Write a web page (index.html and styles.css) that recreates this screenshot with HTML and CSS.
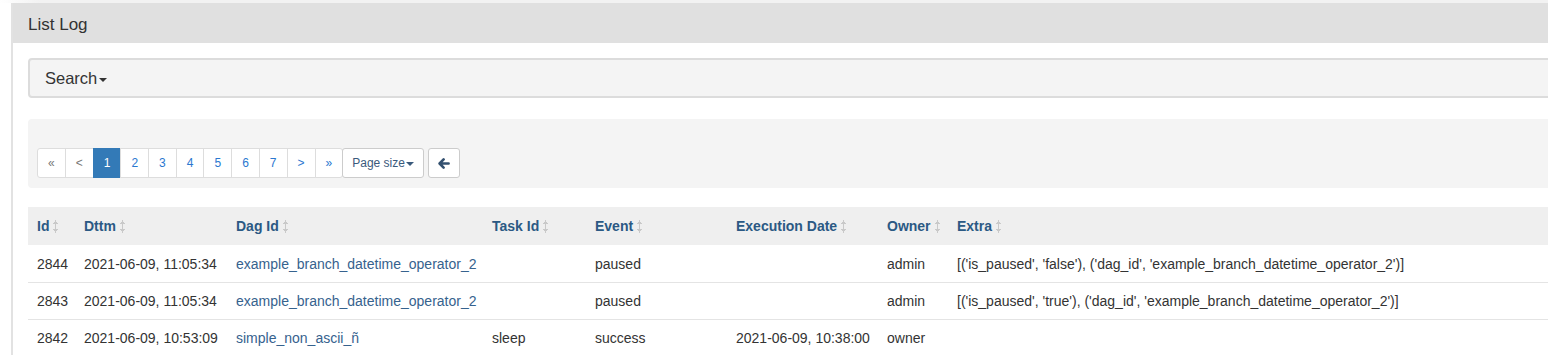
FILE: index.html
```html
<!doctype html>
<html>
  <head>
    <meta charset="utf-8">
    <title>List Log</title>
    <link rel="stylesheet" href="styles.css">
  </head>
  <body>
    <div class="topbar"></div>

    <div class="panel">
      <div class="panel-heading">List Log</div>

      <div class="panel-body">
        <div class="search-bar">
          <span class="search-toggle">Search<span class="caret"></span></span>
        </div>

        <div class="well">
          <ul class="pagination">
            <li class="disabled"><a>&laquo;</a></li>
            <li class="disabled"><a>&lt;</a></li>
            <li class="active"><a>1</a></li>
            <li><a>2</a></li>
            <li><a>3</a></li>
            <li><a>4</a></li>
            <li><a>5</a></li>
            <li><a>6</a></li>
            <li><a>7</a></li>
            <li><a>&gt;</a></li>
            <li><a>&raquo;</a></li>
          </ul>
          <button class="btn">Page size<span class="caret"></span></button>
          <button class="btn btn-icon">
            <svg width="12" height="11" viewBox="0 0 12 11">
              <path d="M5.6 1.4 L1.6 5.5 L5.6 9.6 M2 5.5 H10.6" fill="none" stroke="#33506f" stroke-width="2.6" stroke-linecap="round" stroke-linejoin="round"/>
            </svg>
          </button>
        </div>

        <table class="table">
          <colgroup>
            <col class="w-id">
            <col class="w-dttm">
            <col class="w-dag">
            <col class="w-task">
            <col class="w-event">
            <col class="w-exec">
            <col class="w-owner">
            <col>
          </colgroup>
          <thead>
            <tr>
              <th><a>Id</a><span class="sort"></span></th>
              <th><a>Dttm</a><span class="sort"></span></th>
              <th><a>Dag Id</a><span class="sort"></span></th>
              <th><a>Task Id</a><span class="sort"></span></th>
              <th><a>Event</a><span class="sort"></span></th>
              <th><a>Execution Date</a><span class="sort"></span></th>
              <th><a>Owner</a><span class="sort"></span></th>
              <th><a>Extra</a><span class="sort"></span></th>
            </tr>
          </thead>
          <tbody>
            <tr>
              <td>2844</td>
              <td>2021-06-09, 11:05:34</td>
              <td><a>example_branch_datetime_operator_2</a></td>
              <td></td>
              <td>paused</td>
              <td></td>
              <td>admin</td>
              <td>[('is_paused', 'false'), ('dag_id', 'example_branch_datetime_operator_2')]</td>
            </tr>
            <tr>
              <td>2843</td>
              <td>2021-06-09, 11:05:34</td>
              <td><a>example_branch_datetime_operator_2</a></td>
              <td></td>
              <td>paused</td>
              <td></td>
              <td>admin</td>
              <td>[('is_paused', 'true'), ('dag_id', 'example_branch_datetime_operator_2')]</td>
            </tr>
            <tr>
              <td>2842</td>
              <td>2021-06-09, 10:53:09</td>
              <td><a>simple_non_ascii_ñ</a></td>
              <td>sleep</td>
              <td>success</td>
              <td>2021-06-09, 10:38:00</td>
              <td>owner</td>
              <td></td>
            </tr>
          </tbody>
        </table>
      </div>
    </div>
  </body>
</html>
```

FILE: styles.css
```css
body {
  margin: 0;
  padding: 0 0 0 11px;
  overflow: hidden;
  background: #fff;
  font-family: "Liberation Sans", Arial, sans-serif;
  font-size: 14px;
  color: #333;
}
.topbar {
  height: 3px;
  margin-left: -11px;
  background: linear-gradient(to right, #fff, #f2f2f2 40px);
}
.panel {
  width: 1580px;
  border-left: 2px solid #e2e2e2;
}
.panel-heading {
  height: 38px;
  padding: 2px 15px 0;
  line-height: 40px;
  background: #e0e0e0;
  font-size: 17px;
  color: #333;
}
.panel-body {
  padding: 15px;
}
.search-bar {
  height: 36px;
  line-height: 36px;
  padding: 0 15px;
  background: #f4f4f4;
  border: 2px solid #dcdcdc;
  border-radius: 4px;
}
.search-toggle {
  font-size: 16.5px;
  color: #333;
}
.caret {
  display: inline-block;
  width: 0;
  height: 0;
  margin-left: 2px;
  vertical-align: middle;
  border-top: 4px solid;
  border-left: 4px solid transparent;
  border-right: 4px solid transparent;
}
.well {
  display: flex;
  align-items: center;
  margin-top: 21px;
  padding: 29px 9px 10px;
  background: #f4f4f4;
  border-radius: 4px;
}
.pagination {
  display: flex;
  margin: 0;
  padding: 0;
  list-style: none;
}
.pagination li a {
  display: block;
  padding: 5px 10px;
  margin-left: -1px;
  font-size: 12px;
  line-height: 18px;
  color: #2a78d0;
  background: #fff;
  border: 1px solid #ddd;
}
.pagination li:first-child a {
  margin-left: 0;
  border-radius: 3px 0 0 3px;
}
.pagination li:last-child a {
  border-radius: 0 3px 3px 0;
}
.pagination .disabled a {
  color: #777;
}
.pagination .active a {
  color: #fff;
  background: #337ab7;
  border-color: #337ab7;
}
.btn {
  height: 30px;
  margin-left: -1px;
  padding: 5px 9px;
  font-family: inherit;
  font-size: 12px;
  line-height: 18px;
  color: #3a5a7c;
  background: #fff;
  border: 1px solid #ccc;
  border-radius: 3px;
}
.btn .caret {
  margin-left: 1px;
}
.btn-icon {
  width: 32px;
  margin-left: 4px;
  padding: 0;
  display: flex;
  align-items: center;
  justify-content: center;
}
.table {
  width: 1528px;
  margin-top: 19px;
  border-collapse: collapse;
  table-layout: fixed;
}
.w-id { width: 47px; }
.w-dttm { width: 152px; }
.w-dag { width: 256px; }
.w-task { width: 103px; }
.w-event { width: 141px; }
.w-exec { width: 151px; }
.w-owner { width: 70px; }
.table th {
  padding: 9px 0 9px 9px;
  text-align: left;
  line-height: 20px;
  background: #efefef;
  font-weight: bold;
  white-space: nowrap;
}
.table th a {
  color: #2b5984;
}
.table td {
  padding: 8px 0 8px 9px;
  line-height: 20px;
  border-top: 1px solid #e4e4e4;
  white-space: nowrap;
}
.table tbody tr:first-child td {
  border-top-color: #fff;
}
.table td a {
  color: #36628e;
}
.sort {
  display: inline-block;
  width: 5px;
  height: 13px;
  margin-left: 4px;
  vertical-align: -2px;
  background:
    linear-gradient(#c9c9c9, #c9c9c9) 2px 2px / 1px 9px no-repeat,
    conic-gradient(from 150deg at 50% 0, #c9c9c9 60deg, transparent 0) 0 0 / 5px 4px no-repeat,
    conic-gradient(from -30deg at 50% 100%, #c9c9c9 60deg, transparent 0) 0 9px / 5px 4px no-repeat;
}
```
